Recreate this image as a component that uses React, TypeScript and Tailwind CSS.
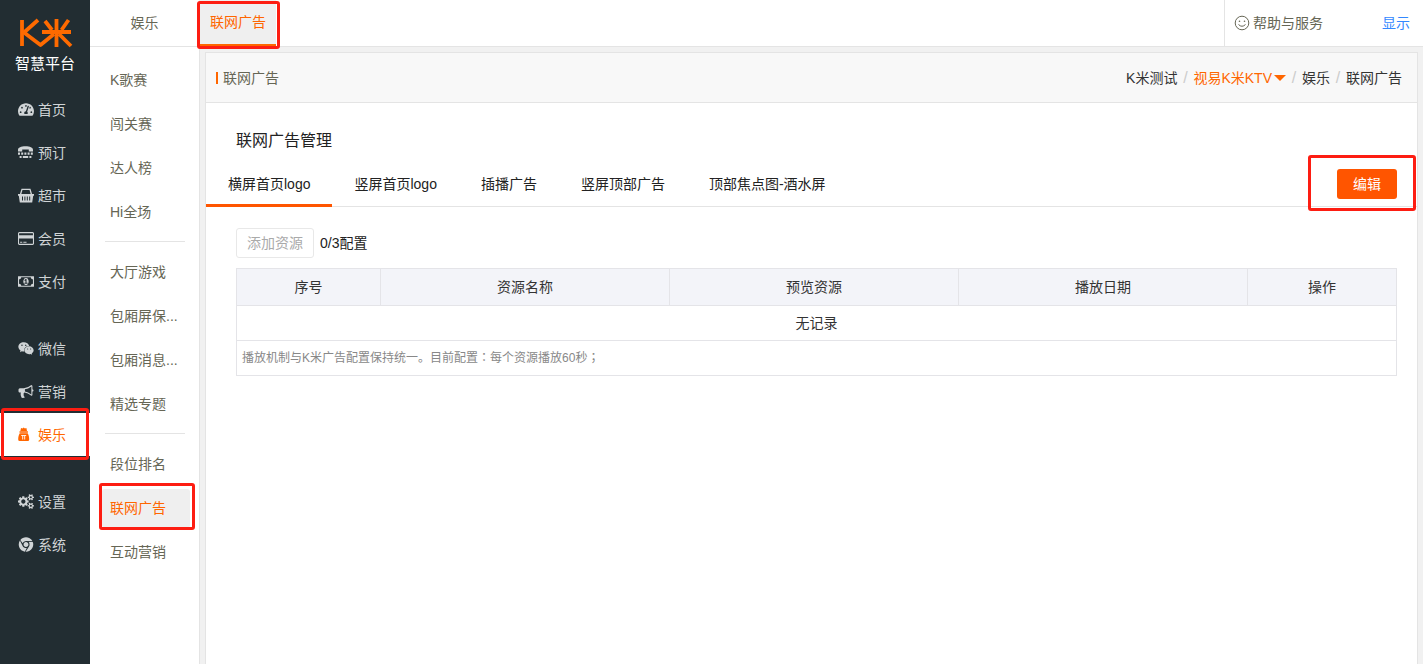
import type { ReactNode } from "react";
import { FaTachometerAlt, FaWeixin, FaChrome } from "react-icons/fa";
import clsx from "clsx";

type IconProps = { className?: string };

const MoneyIcon = ({ className }: IconProps) => (
  <svg viewBox="0 0 1920 1792" fill="currentColor" className={className} aria-hidden="true">
    <path d="M768 1152h384v-96h-128v-448h-114l-148 137 77 80q42-37 55-57h2v288h-128v96zm512-256q0 70-21 142t-59.5 134-101.5 101-138 39-138-39-101.5-101-59.5-134-21-142 21-142 59.5-134 101.5-101 138-39 138 39 101.5 101 59.5 134 21 142zm512 256v-512q-106 0-181-75t-75-181h-1152q0 106-75 181t-181 75v512q106 0 181 75t75 181h1152q0-106 75-181t181-75zm128-832v1152q0 26-19 45t-45 19h-1792q-26 0-45-19t-19-45v-1152q0-26 19-45t45-19h1792q26 0 45 19t19 45z" />
  </svg>
);

const CardIcon = ({ className }: IconProps) => (
  <svg viewBox="0 0 1920 1792" fill="currentColor" className={className} aria-hidden="true">
    <path d="M1760 128q66 0 113 47t47 113v1216q0 66-47 113t-113 47h-1600q-66 0-113-47t-47-113v-1216q0-66 47-113t113-47h1600zm-1600 128q-13 0-22.5 9.5t-9.5 22.5v224h1664v-224q0-13-9.5-22.5t-22.5-9.5h-1600zm1600 1280q13 0 22.5-9.5t9.5-22.5v-608h-1664v608q0 13 9.5 22.5t22.5 9.5h1600zm-1504-128v-128h256v128h-256zm384 0v-128h384v128h-384z" />
  </svg>
);

const BullhornIcon = ({ className }: IconProps) => (
  <svg viewBox="0 0 1792 1792" fill="currentColor" className={className} aria-hidden="true">
    <path d="M1664 640q53 0 90.5 37.5t37.5 90.5-37.5 90.5-90.5 37.5v384q0 52-38 90t-90 38q-417-347-812-380-58 19-91 66t-31 100.5 40 92.5q-20 33-23 65.5t6 58 33.5 55 48 50 61.5 50.5q-29 58-111.5 83t-168.5 11.5-132-55.5q-7-23-29.5-87.5t-32-94.5-23-89-15-101 3.5-98.5 22-110.5h-122q-66 0-113-47t-47-113v-192q0-66 47-113t113-47h480q435 0 896-384 52 0 90 38t38 90v384zm-128 604v-954q-394 302-768 343v270q377 42 768 341z" />
  </svg>
);

const CogsIcon = ({ className }: IconProps) => (
  <svg viewBox="0 0 1920 1792" fill="currentColor" className={className} aria-hidden="true">
    <path d="M896 896q0-106-75-181t-181-75-181 75-75 181 75 181 181 75 181-75 75-181zm768 512q0-52-38-90t-90-38-90 38-38 90q0 53 37.5 90.5t90.5 37.5 90.5-37.5 37.5-90.5zm0-1024q0-52-38-90t-90-38-90 38-38 90q0 53 37.5 90.5t90.5 37.5 90.5-37.5 37.5-90.5zm-384 421v185q0 10-7 19.5t-16 10.5l-155 24q-11 35-32 76 34 48 90 115 7 11 7 20 0 12-7 19-23 30-82.5 89.5t-78.5 59.5q-11 0-21-7l-115-90q-37 19-77 31-11 108-23 155-7 24-30 24h-186q-11 0-20-7.5t-10-17.5l-23-153q-34-10-75-31l-118 89q-7 7-20 7-11 0-21-8-144-133-144-160 0-9 7-19 10-14 41-53t47-61q-23-44-35-82l-152-24q-10-1-17-9.5t-7-19.5v-185q0-10 7-19.5t16-10.5l155-24q11-35 32-76-34-48-90-115-7-11-7-20 0-12 7-20 22-30 82-89t79-59q11 0 21 7l115 90q34-18 77-32 11-108 23-154 7-24 30-24h186q11 0 20 7.5t10 17.5l23 153q34 10 75 31l118-89q8-7 20-7 11 0 21 8 144 133 144 160 0 8-7 19-12 16-42 54t-45 60q23 48 34 82l152 23q10 2 17 10.5t7 19.5zm640 533v140q0 16-149 31-12 27-30 52 51 113 51 138 0 4-4 7-122 71-124 71-8 0-46-47t-52-68q-20 2-30 2t-30-2q-14 21-52 68t-46 47q-2 0-124-71-4-3-4-7 0-25 51-138-18-25-30-52-149-15-149-31v-140q0-16 149-31 13-29 30-52-51-113-51-138 0-4 4-7 4-2 35-20t59-34 30-16q8 0 46 46.5t52 67.5q20-2 30-2t30 2q51-71 92-112l6-2q4 0 124 70 4 3 4 7 0 25-51 138 17 23 30 52 149 15 149 31zm0-1024v140q0 16-149 31-12 27-30 52 51 113 51 138 0 4-4 7-122 71-124 71-8 0-46-47t-52-68q-20 2-30 2t-30-2q-14 21-52 68t-46 47q-2 0-124-71-4-3-4-7 0-25 51-138-18-25-30-52-149-15-149-31v-140q0-16 149-31 13-29 30-52-51-113-51-138 0-4 4-7 4-2 35-20t59-34 30-16q8 0 46 46.5t52 67.5q20-2 30-2t30 2q51-71 92-112l6-2q4 0 124 70 4 3 4 7 0 25-51 138 17 23 30 52 149 15 149 31z" />
  </svg>
);

const PhoneIcon = ({ className }: IconProps) => (
  <svg viewBox="0 0 16 14" fill="currentColor" className={className} aria-hidden="true">
    <path d="M0 6V4.500C0 2 3 .8 7.500.8S15 2 15 4.500V6h-4.200V4H4.200v2z" />
    <path d="M0 7h2v2.200H0zM3.200 7h2v2.200h-2zM6.400 7h2v2.200h-2zM9.600 7h2v2.200h-2zM12.800 7h2v2.200h-2z" />
    <path d="M1.600 10.500h2v2h-2zM4.800 10.500h5.400v2H4.800zM11.400 10.500h2v2h-2z" />
  </svg>
);

const BasketIcon = ({ className }: IconProps) => (
  <svg viewBox="0 0 16 14" className={className} aria-hidden="true">
    <path d="M2.500 6L4 .9h8L13.500 6" fill="none" stroke="currentColor" strokeWidth="1.300" />
    <path
      fill="currentColor"
      fillRule="evenodd"
      d="M0 5.500h16v1.800h-.8L14.200 14H1.800L.8 7.300H0zM4 8v4h1V8zM6.400 8v4h1V8zM8.800 8v4h1V8zM11.200 8v4h1V8z"
    />
  </svg>
);

const BagIcon = ({ className }: IconProps) => (
  <svg viewBox="0 0 16 14" className={className} aria-hidden="true">
    <path
      fill="currentColor"
      d="M3 0.500l1.500.5L5.700 0l1.200 1 1.500-.5L9 3.500H2.400zM1.500 3.800h8.400v1.500H1.500zM1.700 5.700h8C10.800 7.500 11.200 9.500 11.200 12q0 1.500-1.500 1.500h-8Q.2 13.500.2 12c0-2.500.4-4.500 1.500-6.300z"
    />
    <path d="M3.200 8h5M4.700 8v4M6.700 8v4" stroke="white" strokeWidth="0.900" fill="none" />
  </svg>
);

const SmileIcon = () => (
  <svg viewBox="0 0 16 16" className="size-4" aria-hidden="true">
    <circle cx="8" cy="8" r="6.800" fill="none" stroke="currentColor" strokeWidth="1" />
    <circle cx="5.500" cy="6.200" r="0.800" fill="currentColor" />
    <circle cx="10.500" cy="6.200" r="0.800" fill="currentColor" />
    <path d="M4.500 9.500q3.500 3.500 7 0" fill="none" stroke="currentColor" strokeWidth="1" />
  </svg>
);

const mainGroups = [
  [
    { title: "首页", icon: FaTachometerAlt },
    { title: "预订", icon: PhoneIcon },
    { title: "超市", icon: BasketIcon },
    { title: "会员", icon: CardIcon },
    { title: "支付", icon: MoneyIcon },
  ],
  [
    { title: "微信", icon: FaWeixin },
    { title: "营销", icon: BullhornIcon },
    { title: "娱乐", icon: BagIcon, active: true },
  ],
  [
    { title: "设置", icon: CogsIcon },
    { title: "系统", icon: FaChrome },
  ],
];

const subGroups = [
  ["K歌赛", "闯关赛", "达人榜", "Hi全场"],
  ["大厅游戏", "包厢屏保...", "包厢消息...", "精选专题"],
  ["段位排名", "联网广告", "互动营销"],
];

const tabs = ["横屏首页logo", "竖屏首页logo", "插播广告", "竖屏顶部广告", "顶部焦点图-酒水屏"];

const columns = [
  { title: "序号", width: "w-[144px]" },
  { title: "资源名称", width: "" },
  { title: "预览资源", width: "" },
  { title: "播放日期", width: "" },
  { title: "操作", width: "w-[149px]" },
];

// Red frame laid over the steps the user has to follow
function Highlight({ className }: { className: string }) {
  return (
    <span
      className={clsx("pointer-events-none absolute z-10 rounded-[3px] border-3 border-[#fd1d12]", className)}
    />
  );
}

function Logo() {
  return (
    <div className="flex h-[88px] flex-col items-center pt-[18px]">
      <svg viewBox="0 0 54 30" className="ml-[2px] h-[30px] w-[54px]" role="img" aria-label="K米">
        <g fill="none" stroke="#ff6a00" strokeWidth="3.800">
          <path d="M3 2v26" />
          <path d="M19 2L5 14.500l16.500 12.500L35 16" strokeLinejoin="round" />
          <path d="M23 14h29M37.500 1v28M26 3l7 9M49.500 2l-7 10M40 16l12 12" />
        </g>
      </svg>
      <span className="mt-2 text-[15px] leading-4 text-white">智慧平台</span>
    </div>
  );
}

function MainNav() {
  return (
    <aside className="w-[90px] shrink-0 bg-[#222d32]">
      <Logo />
      <nav>
        {mainGroups.map((group, i) => (
          <ul key={i} className="mb-6">
            {group.map((item) => (
              <li key={item.title} className="relative">
                <a
                  href="#"
                  className={clsx(
                    "flex h-[43px] items-center pl-[18px]",
                    "active" in item ? "bg-white text-[#ff6600]" : "text-[#d0d4d6]"
                  )}
                >
                  <span className="w-5">
                    <item.icon className="h-[15px] w-4" />
                  </span>
                  {item.title}
                </a>
                {"active" in item && <Highlight className="-top-[5px] right-px -bottom-1 left-px" />}
              </li>
            ))}
          </ul>
        ))}
      </nav>
    </aside>
  );
}

function SubNav() {
  return (
    <nav className="w-[109px] shrink-0 bg-white pt-[11px]">
      {subGroups.map((group, i) => (
        <ul key={i} className={clsx("mr-[14px] ml-[15px]", i > 0 && "mt-[7px] border-t border-[#e4e4e4] pt-2")}>
          {group.map((title) => (
            <li key={title} className="relative flex h-11 items-center">
              <a
                href="#"
                className={clsx(
                  "-mr-[5px] -ml-[3px] h-[39px] grow rounded-[3px] pl-2 leading-[39px] whitespace-nowrap",
                  title === "联网广告" ? "bg-[#efefef] text-[#ff6600]" : "text-[#666655]"
                )}
              >
                {title}
              </a>
              {title === "联网广告" && <Highlight className="-top-[3px] -right-[10px] bottom-0 -left-[6px]" />}
            </li>
          ))}
        </ul>
      ))}
    </nav>
  );
}

function TopBar() {
  return (
    <header className="flex h-[47px] shrink-0 items-stretch border-b border-[#e4e4e4] bg-white text-[#666655]">
      <a href="#" className="w-[109px] text-center leading-[46px]">
        娱乐
      </a>
      <div className="relative">
        <a
          href="#"
          className="block h-[46px] w-[77px] border-b-2 border-[#ff6600] bg-[#efefef] pl-[11px] leading-[44px] text-[#ff6600]"
        >
          联网广告
        </a>
        <Highlight className="top-px -right-1 -bottom-[3px] -left-[2px]" />
      </div>
      <div className="ml-auto flex w-[199px] items-center border-l border-[#e4e4e4] pl-[9px]">
        <a href="#" className="flex items-center gap-[3px]">
          <SmileIcon />
          帮助与服务
        </a>
        <a href="#" className="mr-[13px] ml-auto text-[#3388ff]">
          显示
        </a>
      </div>
    </header>
  );
}

const Slash = () => <span className="w-[6px] text-center text-base text-[#cccccc]">/</span>;

function PageHeader() {
  return (
    <div className="flex h-[50px] items-center justify-between border-b border-[#e4e4e4] bg-[#f8f8f8] pr-[15px] pl-[10px]">
      <h1 className="flex items-center gap-[5px] text-[#666655]">
        <span className="h-3 w-[2px] bg-[#ff6600]" />
        联网广告
      </h1>
      <div className="flex items-center gap-[5px] text-[#333333]">
        <a href="#">K米测试</a>
        <Slash />
        <button type="button" className="flex items-center gap-[2px] text-[#ff6600]">
          视易K米KTV
          <svg viewBox="0 0 12 6" className="h-[6px] w-3" aria-hidden="true">
            <path fill="currentColor" d="M0 0h12L6 6z" />
          </svg>
        </button>
        <Slash />
        <a href="#">娱乐</a>
        <Slash />
        <span>联网广告</span>
      </div>
    </div>
  );
}

function TabBar() {
  return (
    <div className="flex h-[45px] items-stretch border-b border-[#e4e4e4]">
      {tabs.map((tab, i) => (
        <button
          key={tab}
          type="button"
          className={clsx(
            "-mb-px border-b-3 px-[22px] pt-px text-[#222222]",
            i === 0 ? "border-[#ff5500]" : "border-transparent"
          )}
        >
          {tab}
        </button>
      ))}
      <div className="relative mr-5 ml-auto self-center">
        <button type="button" className="block h-[30px] w-[60px] rounded-[3px] bg-[#ff5500] text-white">
          编辑
        </button>
        <Highlight className="-top-[14px] -right-[19px] -bottom-3 -left-[29px]" />
      </div>
    </div>
  );
}

// Full-width punctuation centred in its box
const Mark = ({ children }: { children: ReactNode }) => (
  <span lang="zh-Hant" className="font-['Noto_Sans_CJK_TC',sans-serif] leading-none">
    {children}
  </span>
);

function ResourceTable() {
  return (
    <table className="mt-[10px] w-full table-fixed border-collapse border border-[#e4e4e8] text-[#333333]">
      <thead>
        <tr className="h-[37px] bg-[#f3f4f9]">
          {columns.map((col) => (
            <th key={col.title} className={clsx("border border-[#e4e4e8] font-normal", col.width)}>
              {col.title}
            </th>
          ))}
        </tr>
      </thead>
      <tbody>
        <tr className="h-[35px] border-b border-[#e4e4e8]">
          <td colSpan={5} className="text-center">
            无记录
          </td>
        </tr>
        <tr className="h-[35px]">
          <td colSpan={5} className="px-[5px] text-xs text-[#888888]">
            播放机制与K米广告配置保持统一。目前配置<Mark>：</Mark>每个资源播放60秒<Mark>；</Mark>
          </td>
        </tr>
      </tbody>
    </table>
  );
}

function Panel({ children }: { children: ReactNode }) {
  return (
    <main className="min-w-0 grow border-l border-[#e4e4e4] bg-[#f1f1f1] pt-[5px] pr-[5px] pl-[5px]">
      <div className="h-full border border-b-0 border-[#e4e4e4] bg-white">{children}</div>
    </main>
  );
}

export default function App() {
  return (
    <div className="flex min-h-screen bg-white font-['Liberation_Sans','Noto_Sans_CJK_SC',sans-serif] text-sm">
      <MainNav />
      <div className="flex min-w-0 grow flex-col">
        <TopBar />
        <div className="flex grow">
          <SubNav />
          <Panel>
            <PageHeader />
            <h2 className="px-[30px] pt-[26px] pb-[9px] text-base text-[#222222]">联网广告管理</h2>
            <TabBar />
            <section className="px-5 pt-[21px] pl-[30px]">
              <div className="flex items-center gap-[6px] text-[#222222]">
                <button
                  type="button"
                  disabled
                  className="h-[30px] w-[78px] rounded-[3px] border border-[#e8e8e8] text-[#aaaaaa]"
                >
                  添加资源
                </button>
                <span>0/3配置</span>
              </div>
              <ResourceTable />
            </section>
          </Panel>
        </div>
      </div>
    </div>
  );
}
